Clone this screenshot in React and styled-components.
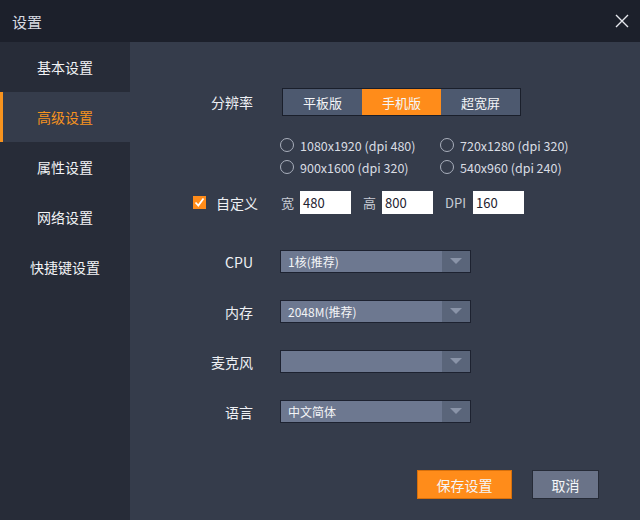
import React from 'react';
import styled, { createGlobalStyle } from 'styled-components';

const GlobalStyle = createGlobalStyle`
  body {
    margin: 0;
    font-family: "Microsoft YaHei", "Noto Sans CJK SC", "Liberation Sans", sans-serif;
    background: #353c4b;
  }
`;

const Window = styled.div`
  width: 640px;
  height: 520px;
  display: flex;
  flex-direction: column;
  background: #353c4b;
  color: #eef0f4;
  overflow: hidden;
`;

const TitleBar = styled.div`
  height: 42px;
  flex: none;
  display: flex;
  align-items: center;
  justify-content: space-between;
  padding: 0 12px;
  background: #1c202b;
  font-size: 15px;
  color: #d8dbe2;
`;

const Close = styled.div`
  width: 18px;
  height: 18px;
  display: flex;
  align-items: center;
  justify-content: center;
  margin-right: -3px;
`;

const Body = styled.div`
  flex: 1;
  display: flex;
`;

const Sidebar = styled.div`
  width: 130px;
  flex: none;
  background: #272c38;
  display: flex;
  flex-direction: column;
`;

const NavItem = styled.div`
  height: 50px;
  display: flex;
  align-items: center;
  justify-content: center;
  font-size: 14px;
  color: ${p => (p.$active ? '#f7931e' : '#f2f3f5')};
  background: ${p => (p.$active ? '#353c4b' : 'transparent')};
  border-left: 3px solid ${p => (p.$active ? '#f7931e' : 'transparent')};
  padding-right: 3px;
`;

const Content = styled.div`
  flex: 1;
  display: flex;
  flex-direction: column;
  padding: 46px 0 0 0;
  font-size: 13px;
`;

const Row = styled.div`
  display: flex;
  align-items: center;
`;

const Label = styled.div`
  width: 123px;
  text-align: right;
  font-size: 14px;
  color: #eef0f4;
  padding-right: 27px;
  flex: none;
`;

const Segments = styled.div`
  display: flex;
  border: 1px solid #1a1f2b;
  height: 26px;
  margin-left: 2px;
`;

const Segment = styled.div`
  width: 79px;
  display: flex;
  align-items: center;
  justify-content: center;
  font-size: 13px;
  background: ${p => (p.$active ? '#ff8c1a' : '#4d596f')};
  color: #f4f5f7;
`;

const RadioGrid = styled.div`
  display: grid;
  grid-template-columns: 160px 160px;
  row-gap: 4px;
  margin: 20px 0 0 150px;
`;

const Radio = styled.div`
  display: flex;
  align-items: center;
  gap: 6px;
  font-size: 12.5px;
  color: #d9dce3;
  height: 18px;
`;

const Circle = styled.span`
  width: 12px;
  height: 12px;
  border: 1px solid #a9afbc;
  border-radius: 50%;
  flex: none;
`;

const CustomRow = styled(Row)`
  margin-top: 15px;
  padding-left: 63px;
`;

const Check = styled.span`
  width: 13px;
  height: 13px;
  background: #ff8c1a;
  display: flex;
  align-items: center;
  justify-content: center;
  margin-right: 10px;
`;

const CustomLabel = styled.span`
  font-size: 14px;
  width: 65px;
`;

const Small = styled.span`
  font-size: 13px;
  color: #c8ccd5;
  margin-right: ${p => p.$gap || 6}px;
`;

const Input = styled.div`
  width: 51px;
  height: 23px;
  background: #fff;
  color: #1e2230;
  font-size: 13px;
  display: flex;
  align-items: center;
  padding-left: 3px;
  box-sizing: border-box;
  margin-right: ${p => p.$gap}px;
`;

const Selects = styled.div`
  display: flex;
  flex-direction: column;
  gap: 27px;
  margin-top: 36px;
`;

const Select = styled.div`
  width: 191px;
  height: 23px;
  display: flex;
  border: 1px solid #1d2230;
  box-sizing: border-box;
  background: #6d7890;
  font-size: 12px;
  color: #f3f4f6;
`;

const SelectText = styled.div`
  flex: 1;
  display: flex;
  align-items: center;
  padding-left: 7px;
`;

const Arrow = styled.div`
  width: 28px;
  background: #5a657a;
  display: flex;
  align-items: center;
  justify-content: center;
`;

const Actions = styled.div`
  display: flex;
  gap: 20px;
  margin: auto 0 21px 287px;
`;

const Button = styled.div`
  height: 29px;
  width: ${p => p.$w}px;
  display: flex;
  align-items: center;
  justify-content: center;
  font-size: 14px;
  color: #f4f5f7;
  background: ${p => (p.$primary ? '#ff8c1a' : '#6a7388')};
  border: 1px solid ${p => (p.$primary ? '#d7700c' : '#262b37')};
  box-sizing: border-box;
`;

const nav = ['基本设置', '高级设置', '属性设置', '网络设置', '快捷键设置'];
const radios = ['1080x1920 (dpi 480)', '720x1280 (dpi 320)', '900x1600 (dpi 320)', '540x960 (dpi 240)'];
const selects = [
  ['CPU', '1核(推荐)'],
  ['内存', '2048M(推荐)'],
  ['麦克风', ''],
  ['语言', '中文简体'],
];

export default function App() {
  return (
    <Window>
      <GlobalStyle />
      <TitleBar>
        <span>设置</span>
        <Close>
          <svg width="14" height="14" viewBox="0 0 14 14">
            <path d="M1 1L13 13M13 1L1 13" stroke="#e6e8ee" strokeWidth="1.4" />
          </svg>
        </Close>
      </TitleBar>
      <Body>
        <Sidebar>
          {nav.map((n, i) => (
            <NavItem key={n} $active={i === 1}>{n}</NavItem>
          ))}
        </Sidebar>
        <Content>
          <Row>
            <Label>分辨率</Label>
            <Segments>
              <Segment>平板版</Segment>
              <Segment $active>手机版</Segment>
              <Segment>超宽屏</Segment>
            </Segments>
          </Row>
          <RadioGrid>
            {radios.map(r => (
              <Radio key={r}>
                <Circle />
                {r}
              </Radio>
            ))}
          </RadioGrid>
          <CustomRow>
            <Check>
              <svg width="11" height="11" viewBox="0 0 11 11">
                <path d="M1.5 5.5L4.3 8.5L9.5 1.5" stroke="#fff" strokeWidth="1.8" fill="none" />
              </svg>
            </Check>
            <CustomLabel>自定义</CustomLabel>
            <Small>宽</Small>
            <Input $gap={12}>480</Input>
            <Small>高</Small>
            <Input $gap={12}>800</Input>
            <Small $gap={7}>DPI</Small>
            <Input $gap={0}>160</Input>
          </CustomRow>
          <Selects>
            {selects.map(([l, v]) => (
              <Row key={l}>
                <Label>{l}</Label>
                <Select>
                  <SelectText>{v}</SelectText>
                  <Arrow>
                    <svg width="12" height="7" viewBox="0 0 12 7">
                      <path d="M0 0H12L6 6Z" fill="#8a94a8" />
                    </svg>
                  </Arrow>
                </Select>
              </Row>
            ))}
          </Selects>
          <Actions>
            <Button $primary $w={95}>保存设置</Button>
            <Button $w={67}>取消</Button>
          </Actions>
        </Content>
      </Body>
    </Window>
  );
}
